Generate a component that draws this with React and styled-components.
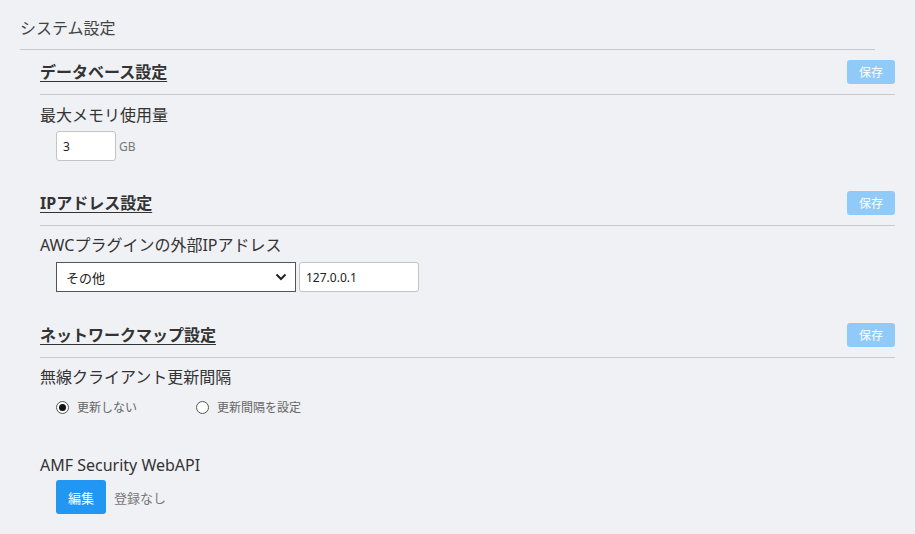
import styled, { createGlobalStyle } from "styled-components"

const Global = createGlobalStyle`
  body {
    margin: 0;
    background: #f0f1f5;
    font-family: "Noto Sans", "Noto Sans CJK JP", sans-serif;
    color: #333;
  }
`

const Page = styled.div`
  padding: 0 20px 20px 20px;
`

const PageTitle = styled.h1`
  margin: 0;
  width: 855px;
  height: 50px;
  box-sizing: border-box;
  padding-top: 17px;
  font-size: 16px;
  font-weight: normal;
  line-height: 22px;
  color: #444;
  border-bottom: 1px solid #c8c9cc;
`

const Content = styled.div`
  padding-left: 20px;
  width: 855px;
`

const SectionHead = styled.div`
  display: flex;
  align-items: center;
  justify-content: space-between;
  padding: 10px 0;
  border-bottom: 1px solid #c8c9cc;
`

const SectionTitle = styled.h2`
  margin: 0;
  font-size: 16px;
  font-weight: bold;
  line-height: 22px;
  color: #333;
  text-decoration: underline;
  text-underline-offset: 3px;
`

const SaveButton = styled.button`
  width: 48px;
  height: 24px;
  border: none;
  border-radius: 3px;
  background: #90caf9;
  color: #fff;
  font-family: inherit;
  font-size: 12px;
  padding: 0;
`

const Field = styled.div`
  padding-top: ${(p) => p.$top ?? 9}px;
  padding-bottom: ${(p) => p.$bottom ?? 20}px;
`

const Label = styled.div`
  font-size: 16px;
  line-height: 22px;
  color: #333;
`

const Controls = styled.div`
  display: flex;
  align-items: center;
  gap: ${(p) => p.$gap || 3}px;
  margin-top: ${(p) => p.$mt ?? 5}px;
  padding-left: 16px;
`

const TextInput = styled.input`
  box-sizing: border-box;
  width: ${(p) => p.$w}px;
  height: 30px;
  border: 1px solid #c4c4c4;
  border-radius: 3px;
  background: #fff;
  padding: 0 6px;
  font-family: inherit;
  font-size: 12px;
  color: #222;
  outline: none;
`

const Unit = styled.span`
  font-size: 12px;
  color: #777;
`

const SelectBox = styled.div`
  position: relative;
  box-sizing: border-box;
  width: 240px;
  height: 30px;
  border: 1px solid #555;
  background: #fff;
  display: flex;
  align-items: center;
  padding-left: 9px;
  font-size: 13px;
  color: #222;

  svg {
    position: absolute;
    right: 8px;
    top: 9px;
  }
`

const RadioGroup = styled.div`
  display: flex;
  gap: 59px;
`

const Radio = styled.label`
  display: flex;
  align-items: center;
  gap: 8px;
  font-size: 12px;
  color: #666;
  height: 20px;
`

const RadioDot = styled.span`
  box-sizing: border-box;
  width: 13px;
  height: 13px;
  border-radius: 50%;
  border: 1px solid #555;
  background: #fff;
  display: flex;
  align-items: center;
  justify-content: center;

  &::after {
    content: "";
    width: 7px;
    height: 7px;
    border-radius: 50%;
    background: ${(p) => (p.$on ? "#111" : "transparent")};
  }
`

const EditButton = styled.button`
  width: 50px;
  height: 34px;
  border: none;
  border-radius: 3px;
  background: #2196f3;
  color: #fff;
  font-family: inherit;
  font-size: 13px;
  padding: 0;
`

const Note = styled.span`
  font-size: 13px;
  color: #777;
  margin-left: 5px;
`

const Chevron = () => (
  <svg width="12" height="10" viewBox="0 0 12 10">
    <path d="M1.5 2.5 L6 7 L10.5 2.5" fill="none" stroke="#222" strokeWidth="2" />
  </svg>
)

const Section = ({ title }) => (
  <SectionHead>
    <SectionTitle>{title}</SectionTitle>
    <SaveButton>保存</SaveButton>
  </SectionHead>
)

const App = () => {
  return (
    <Page>
      <Global />
      <PageTitle>システム設定</PageTitle>
      <Content>
        <Section title="データベース設定" />
        <Field $top={9} $bottom={20}>
          <Label>最大メモリ使用量</Label>
          <Controls>
            <TextInput $w={60} defaultValue="3" />
            <Unit>GB</Unit>
          </Controls>
        </Field>

        <Section title="IPアドレス設定" />
        <Field $top={8} $bottom={21}>
          <Label>AWCプラグインの外部IPアドレス</Label>
          <Controls $mt={6}>
            <SelectBox>
              その他
              <Chevron />
            </SelectBox>
            <TextInput $w={120} defaultValue="127.0.0.1" />
          </Controls>
        </Field>

        <Section title="ネットワークマップ設定" />
        <Field $top={8} $bottom={37}>
          <Label>無線クライアント更新間隔</Label>
          <Controls $mt={9}>
            <RadioGroup>
              <Radio>
                <RadioDot $on />
                更新しない
              </Radio>
              <Radio>
                <RadioDot />
                更新間隔を設定
              </Radio>
            </RadioGroup>
          </Controls>
        </Field>

        <Field $top={0} $bottom={10}>
          <Label>AMF Security WebAPI</Label>
          <Controls $mt={4}>
            <EditButton>編集</EditButton>
            <Note>登録なし</Note>
          </Controls>
        </Field>
      </Content>
    </Page>
  )
}

export default App
